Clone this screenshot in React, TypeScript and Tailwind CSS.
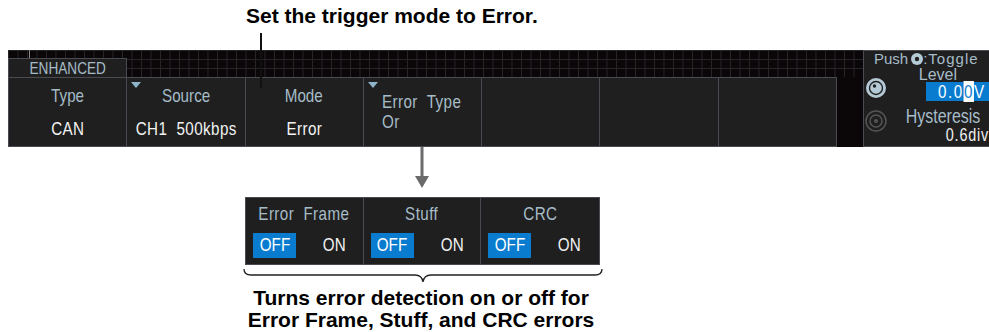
import React from 'react'

const lcd = "font-['Liberation_Sans',Arial,sans-serif]"

function N({ children, o = 'c', className = '' }: { children: React.ReactNode; o?: 'l' | 'c' | 'r'; className?: string }) {
  const origin = o === 'l' ? 'origin-left' : o === 'r' ? 'origin-right' : 'origin-center'
  return <span className={`inline-block scale-x-[0.8] whitespace-pre ${origin} ${className}`}>{children}</span>
}

function Tri() {
  return (
    <svg width="10" height="6" viewBox="0 0 10 6" className="absolute left-[4px] top-[4px]">
      <path d="M0 0 L10 0 L5 6 Z" fill="#8fb3cc" />
    </svg>
  )
}

function Knob({ dim }: { dim?: boolean }) {
  return (
    <svg width="22" height="22" viewBox="0 0 22 22">
      {dim ? (
        <>
          <circle cx="11" cy="11" r="10" fill="none" stroke="#555" strokeWidth="1.5" />
          <circle cx="11" cy="11" r="6" fill="none" stroke="#555" strokeWidth="1.5" />
          <circle cx="11" cy="11" r="2" fill="#555" />
        </>
      ) : (
        <>
          <circle cx="11" cy="11" r="10" fill="#b4cad6" />
          <circle cx="11" cy="11" r="7.2" fill="#1f1f1f" />
          <circle cx="11" cy="11" r="5.8" fill="#b4cad6" />
          <circle cx="9.5" cy="9" r="1.7" fill="#1f1f1f" />
        </>
      )}
    </svg>
  )
}

function Cell({ label, value, tri }: { label?: string; value?: string; tri?: boolean }) {
  return (
    <div className="relative flex flex-col items-center border-r border-[#4a4a52] bg-[#1f1f1f]">
      {tri && <Tri />}
      {label && (
        <div className="mt-[8px] text-[19px] leading-[20px] text-[#a6bcc8]">
          <N>{label}</N>
        </div>
      )}
      {value && (
        <div className="mt-[13px] text-[19px] leading-[20px] text-[#f2f2f2] tracking-[0.5px]">
          <N>{value}</N>
        </div>
      )}
    </div>
  )
}

function Toggle({ label }: { label: string }) {
  return (
    <div className="flex flex-col border-r border-[#4a4a52] last:border-r-0">
      <div className="h-[33px] flex items-center justify-center text-[19px] text-[#a6bcc8] tracking-[0.5px]">
        <N>{label}</N>
      </div>
      <div className="flex items-center pl-[7px]">
        <div className="w-[43px] h-[25px] bg-[#0a7cd0] text-white text-[19px] flex items-center justify-center">
          <N>OFF</N>
        </div>
        <div className="ml-[24px] text-[19px] text-[#f2f2f2]">
          <N>ON</N>
        </div>
      </div>
    </div>
  )
}

export default function App() {
  return (
    <div className="relative w-[989px] h-[332px] bg-white overflow-hidden font-['Liberation_Sans',Arial,sans-serif]">
      <div className="h-[50px] pl-[246px] pt-[4px] text-[21px] font-bold text-black leading-[24px]">
        Set the trigger mode to Error.
      </div>

      <div className={`flex h-[97px] ${lcd}`}>
        <div className="w-[8px] bg-white" />
        <div className="w-[855px] flex flex-col">
          <div className="relative h-[27px] bg-[#0b0709] bg-[linear-gradient(to_right,#25252a_1px,transparent_1px),linear-gradient(to_bottom,#25252a_1px,transparent_1px)] bg-[size:9.5px_9px]">
            <div className="absolute left-[21px] top-0 h-[8px] w-px bg-[#888]" />
            <div className="absolute left-0 top-[8px] w-[119px] h-[19px] bg-[#1f1f1f] border border-b-0 border-[#4a4a52] flex justify-center text-[17px] leading-[19px] text-[#a6bcc8]">
              <N>ENHANCED</N>
            </div>
          </div>
          <div className="flex h-[70px]">
            <div className="w-[829px] grid grid-cols-7 border-t border-l border-b border-[#4a4a52]">
              <Cell label="Type" value="CAN" />
              <Cell label="Source" value="CH1  500kbps" tri />
              <Cell label="Mode" value="Error" />
              <div className="relative border-r border-[#4a4a52] bg-[#1f1f1f] pl-[18px] pt-[14px] text-[19px] leading-[20px] text-[#a6bcc8] tracking-[0.5px]">
                <Tri />
                <div>
                  <N o="l">Error  Type</N>
                </div>
                <div>
                  <N o="l">Or</N>
                </div>
              </div>
              <Cell />
              <Cell />
              <Cell />
            </div>
            <div className="flex-1 bg-[#0b0709]" />
          </div>
        </div>
        <div className="w-[126px] bg-[#1f1f1f] border-l border-t border-b border-[#4a4a52] text-[#a6bcc8]">
          <div className="flex items-center pl-[10px] h-[16px] text-[15px] leading-[16px]">
            <span>Push</span>
            <svg width="12" height="12" viewBox="0 0 12 12" className="ml-[3px] shrink-0">
              <circle cx="6" cy="6" r="6" fill="#b4cad6" />
              <circle cx="6" cy="6" r="2.2" fill="#1f1f1f" />
            </svg>
            <span className="tracking-[1px]">:Toggle</span>
          </div>
          <div className="flex">
            <div className="pl-[1px] pt-[10px]">
              <Knob />
            </div>
            <div className="flex-1 flex flex-col items-end">
              <div className="h-[15px] text-[16px] leading-[15px] pr-[32px]">Level</div>
              <div className="w-[63px] h-[19px] bg-[#0a7cd0] text-white text-[19px] leading-[19px] flex justify-end pr-[3px] tracking-[2px]">
                <N o="r">
                  0.0<span className="bg-white text-[#0a7cd0]">0</span>V
                </N>
              </div>
            </div>
          </div>
          <div className="flex">
            <div className="pl-[1px] pt-[9px]">
              <Knob dim />
            </div>
            <div className="flex-1 flex flex-col items-end pr-[3px]">
              <div className="mt-[6px] h-[19px] text-[20px] leading-[19px] pr-[9px]">
                <N o="r">Hysteresis</N>
              </div>
              <div className="h-[18px] text-[18px] leading-[18px] text-[#f2f2f2] tracking-[1px]">
                <N o="r">0.6div</N>
              </div>
            </div>
          </div>
        </div>
      </div>

      <div className="h-[50px] pl-[414px]">
        <svg width="16" height="42" viewBox="0 0 16 42">
          <line x1="8" y1="0" x2="8" y2="31" stroke="#6b6b6b" strokeWidth="3" />
          <path d="M1 29 L15 29 L8 41 Z" fill="#6b6b6b" />
        </svg>
      </div>

      <div className={`ml-[245px] w-[355px] h-[68px] grid grid-cols-3 bg-[#1f1f1f] border border-[#4a4a52] ${lcd}`}>
        <Toggle label="Error  Frame" />
        <Toggle label="Stuff" />
        <Toggle label="CRC" />
      </div>

      <div className="pl-[243px] pt-[3px]">
        <svg width="360" height="16" viewBox="0 0 360 16">
          <path
            d="M1 1 Q1 7 8 7 L172 7 Q179 7 180 14 Q181 7 188 7 L352 7 Q359 7 359 1"
            fill="none"
            stroke="#222"
            strokeWidth="1.3"
          />
        </svg>
      </div>
      <div className="mt-[3px] w-[842px] text-center text-[21px] font-bold leading-[22px] text-black">
        <div>Turns error detection on or off for</div>
        <div>Error Frame, Stuff, and CRC errors</div>
      </div>

      <div className="absolute left-[260px] top-[33px] w-[2px] h-[55px] bg-[#111]" />
    </div>
  )
}
